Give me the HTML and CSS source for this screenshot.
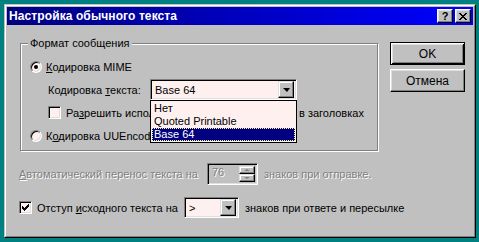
FILE: index.html
```html
<!DOCTYPE html>
<html lang="ru">
<head>
<meta charset="utf-8">
<title>Настройка обычного текста</title>
<link rel="stylesheet" href="styles.css">
</head>
<body>
<div class="window">
  <div class="frame">
    <div class="titlebar">
      <span class="title">Настройка обычного текста</span>
      <div class="tbtns">
        <span class="tbtn help">?</span>
        <span class="tbtn close"><svg width="8" height="7" viewBox="0 0 8 7"><path d="M0 0h2v1h1v1h2v-1h1v-1h2v1h-1v1h-1v1h-1v1h1v1h1v1h1v1h-2v-1h-1v-1h-2v1h-1v1h-2v-1h1v-1h1v-1h1v-1h-1v-1h-1v-1h-1z" fill="#000"/></svg></span>
      </div>
    </div>
    <div class="client">
      <div class="left">
        <div class="group">
          <span class="legend">Формат сообщения</span>
          <div class="row r-mime">
            <span class="radio on"></span>
            <span class="lbl"><u>К</u>одировка MIME</span>
          </div>
          <div class="row r-enc">
            <span class="enc-lbl">Кодировка <u>т</u>екста:</span>
            <div class="combo enc-combo">
              <span class="val">Base 64</span>
              <span class="ddbtn"><span class="arrow"></span></span>
              <div class="list">
                <div class="item">Нет</div>
                <div class="item">Quoted Printable</div>
                <div class="item sel">Base 64</div>
              </div>
            </div>
          </div>
          <div class="row r-8bit">
            <span class="check"></span>
            <span class="clip">Ра<u>з</u>решить использование 8-битных символов</span>
            <span class="tail">в заголовках</span>
          </div>
          <div class="row r-uue">
            <span class="radio"></span>
            <span class="lbl">К<u>о</u>дировка UUEncode</span>
          </div>
        </div>
        <div class="row r-wrap disabled">
          <span class="wrap-lbl"><u>А</u>втоматический перенос текста на</span>
          <div class="spin">
            <span class="spin-val">76</span>
            <div class="spin-btns">
              <span class="sbtn"><span class="up"></span></span>
              <span class="sbtn"><span class="down"></span></span>
            </div>
          </div>
          <span class="after">знаков при отправке.</span>
        </div>
        <div class="row r-indent">
          <span class="check on"><svg width="7" height="7" viewBox="0 0 7 7"><path d="M6 0h1v3h-1v1h-1v1h-1v1h-1v1h-1v-1h-1v-1h-1v-3h1v1h1v1h1v-1h1v-1h1v-1h1z" fill="#000"/></svg></span>
          <span class="indent-lbl">Отступ <u>и</u>сходного текста на</span>
          <div class="combo small-combo">
            <span class="val">&gt;</span>
            <span class="ddbtn"><span class="arrow"></span></span>
          </div>
          <span class="after2">знаков при ответе и пересылке</span>
        </div>
      </div>
      <div class="buttons">
        <div class="btn default">OK</div>
        <div class="btn">Отмена</div>
      </div>
    </div>
  </div>
</div>
</body>
</html>
```
FILE: styles.css
```css
* { box-sizing: border-box; }
html, body { margin: 0; padding: 0; }
body {
  background: #008080;
  padding: 4px;
  font-family: "Liberation Sans", Arial, sans-serif;
  font-size: 11px;
  color: #000;
}
u { text-decoration: underline; text-underline-offset: 1px; }

.window {
  width: 472px;
  height: 234px;
  border: 1px solid;
  border-color: #c0c0c0 #000 #000 #c0c0c0;
  background: #c0c0c0;
}
.frame {
  height: 100%;
  border: 1px solid;
  border-color: #fff #808080 #808080 #fff;
  padding: 1px;
  display: flex;
  flex-direction: column;
}
.titlebar {
  height: 18px;
  background: linear-gradient(to right, #000080, #0000ff);
  display: flex;
  align-items: center;
  justify-content: space-between;
  padding: 0 2px 0 2px;
}
.title {
  color: #fff;
  font-weight: bold;
  font-size: 12px;
  letter-spacing: 0.1px;
}
.tbtns { display: flex; gap: 2px; }
.tbtn {
  width: 16px;
  height: 14px;
  background: #c0c0c0;
  border: 1px solid;
  border-color: #fff #000 #000 #fff;
  box-shadow: inset -1px -1px #808080, inset 1px 1px #dfdfdf;
  display: flex;
  align-items: center;
  justify-content: center;
  font-weight: bold;
  font-size: 11px;
  line-height: 1;
}
.tbtn.help { padding-top: 1px; }

.client {
  flex: 1;
  display: flex;
}
.left {
  width: 383px;
  padding-left: 12px;
  padding-top: 18px;
  white-space: nowrap;
}
.group {
  position: relative;
  margin-left: 1px;
  width: 358px;
  height: 108px;
  border: 1px solid #808080;
  box-shadow: 1px 1px 0 #fff, inset 1px 1px 0 #fff;
  padding: 16px 0 0 9px;
}
.legend {
  position: absolute;
  left: 7px;
  top: -8px;
  background: #c0c0c0;
  padding: 0 2px;
  line-height: 14px;
}
.row {
  display: flex;
  align-items: center;
  white-space: nowrap;
}
.r-mime { height: 13px; }
.r-enc { height: 21px; margin-top: 6px; padding-left: 18px; }
.r-8bit { height: 13px; margin-top: 6px; padding-left: 18px; }
.r-uue { height: 13px; margin-top: 10px; }

.clip {
  width: 84px;
  overflow: hidden;
  flex: none;
}
.tail { margin-left: 149px; }

.radio {
  width: 12px;
  height: 12px;
  border-radius: 50%;
  border: 1px solid;
  border-color: #808080 #fff #fff #808080;
  box-shadow: inset 1px 1px #000, inset -1px -1px #dfdfdf;
  background: #fff0f0;
  margin-right: 4px;
  flex: none;
  display: flex;
  align-items: center;
  justify-content: center;
}
.radio.on::after {
  content: "";
  width: 4px;
  height: 4px;
  background: #000;
  border-radius: 50%;
}
.check {
  width: 13px;
  height: 13px;
  border: 1px solid;
  border-color: #808080 #fff #fff #808080;
  box-shadow: inset 1px 1px #000, inset -1px -1px #dfdfdf;
  background: #fff0f0;
  margin-right: 5px;
  flex: none;
  display: flex;
  align-items: center;
  justify-content: center;
}
.enc-lbl { width: 102px; flex: none; }

.combo {
  position: relative;
  height: 21px;
  border: 1px solid;
  border-color: #808080 #fff #fff #808080;
  box-shadow: inset 1px 1px #000, inset -1px -1px #dfdfdf;
  background: #fff0f0;
  display: flex;
  align-items: center;
  padding: 2px;
  flex: none;
}
.combo .val { flex: 1; padding-left: 2px; }
.enc-combo { width: 147px; }
.ddbtn {
  width: 16px;
  height: 17px;
  background: #c0c0c0;
  border: 1px solid;
  border-color: #dfdfdf #000 #000 #dfdfdf;
  box-shadow: inset -1px -1px #808080, inset 1px 1px #fff;
  display: flex;
  align-items: center;
  justify-content: center;
  flex: none;
}
.arrow {
  width: 0;
  height: 0;
  border-left: 4px solid transparent;
  border-right: 3px solid transparent;
  border-top: 4px solid #000;
  margin-top: 1px;
}
.list {
  position: absolute;
  left: -1px;
  top: 20px;
  width: 147px;
  border: 1px solid #000;
  background: #fff0f0;
  padding: 1px;
  z-index: 2;
}
.item {
  height: 13px;
  line-height: 13px;
  padding-left: 2px;
}
.item.sel {
  background: #000080;
  color: #fff;
  outline: 1px dotted #ffff80;
  outline-offset: -1px;
}

.r-wrap { height: 22px; margin-top: 12px; }
.disabled { color: #808080; text-shadow: 1px 1px 0 #fff; }
.wrap-lbl { width: 188px; flex: none; }
.spin {
  width: 51px;
  height: 22px;
  border: 1px solid;
  border-color: #808080 #fff #fff #808080;
  box-shadow: inset 1px 1px #000, inset -1px -1px #dfdfdf;
  background: #c0c0c0;
  display: flex;
  padding: 2px;
  flex: none;
}
.spin-val { flex: 1; padding-left: 2px; line-height: 12px; }
.spin-btns { width: 16px; display: flex; flex-direction: column; }
.sbtn {
  flex: 1;
  border: 1px solid;
  border-color: #dfdfdf #000 #000 #dfdfdf;
  box-shadow: inset -1px -1px #808080, inset 1px 1px #fff;
  display: flex;
  align-items: center;
  justify-content: center;
}
.up { width: 0; height: 0; border-left: 3px solid transparent; border-right: 3px solid transparent; border-bottom: 2px solid #808080; }
.down { width: 0; height: 0; border-left: 3px solid transparent; border-right: 3px solid transparent; border-top: 2px solid #808080; }
.after { margin-left: 6px; }

.r-indent { height: 21px; margin-top: 12px; }
.indent-lbl { width: 147px; flex: none; }
.small-combo { width: 55px; }
.after2 { margin-left: 6px; }

.buttons {
  padding-top: 17px;
  display: flex;
  flex-direction: column;
  gap: 4px;
}
.btn {
  width: 75px;
  height: 23px;
  border: 1px solid;
  border-color: #fff #000 #000 #fff;
  box-shadow: inset -1px -1px #808080, inset 1px 1px #dfdfdf;
  display: flex;
  align-items: center;
  justify-content: center;
  font-size: 12px;
}
.btn.default {
  border-color: #000;
  box-shadow: inset 1px 1px #fff, inset -1px -1px #000, inset 2px 2px #dfdfdf, inset -2px -2px #808080;
}
```
